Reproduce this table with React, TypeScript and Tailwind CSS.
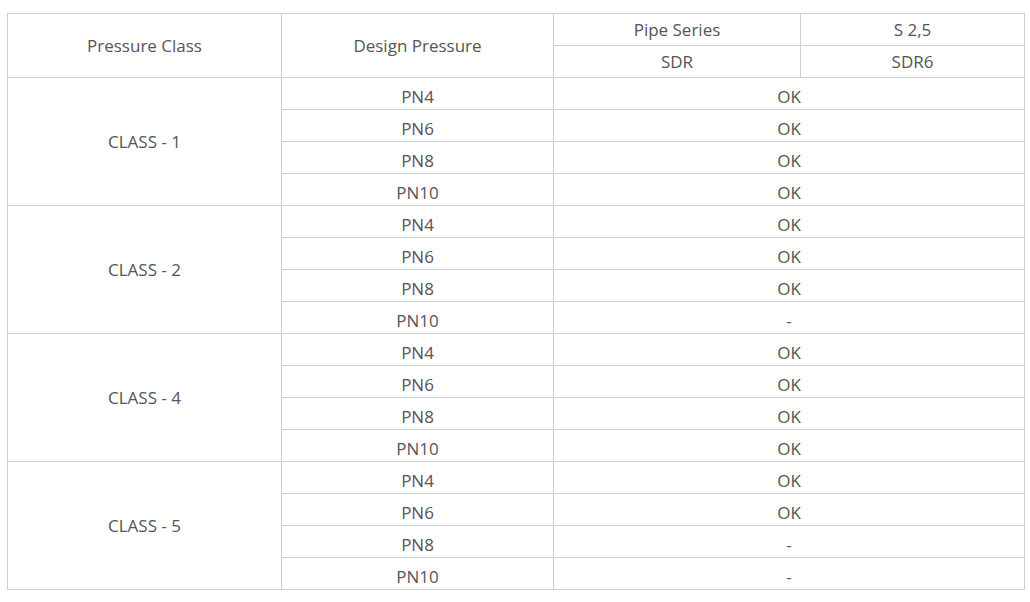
const groups = [
  { name: "CLASS - 1", values: ["OK", "OK", "OK", "OK"] },
  { name: "CLASS - 2", values: ["OK", "OK", "OK", "-"] },
  { name: "CLASS - 4", values: ["OK", "OK", "OK", "OK"] },
  { name: "CLASS - 5", values: ["OK", "OK", "-", "-"] },
]

const pressures = ["PN4", "PN6", "PN8", "PN10"]

const cell = "border border-[#d0d0d0] text-center align-middle p-0 leading-[24px]"

export default function App() {
  return (
    <div className="min-h-screen bg-white pt-[13px] pl-[7px] font-['Open_Sans',sans-serif] text-[17px] text-[#555555]">
      <table className="w-[1017px] table-fixed border-collapse">
        <colgroup>
          <col className="w-[274px]" />
          <col className="w-[272px]" />
          <col className="w-[247px]" />
          <col className="w-[224px]" />
        </colgroup>
        <thead>
          <tr className="h-[32px]">
            <th rowSpan={2} className={`${cell} font-normal`}>Pressure Class</th>
            <th rowSpan={2} className={`${cell} font-normal`}>Design Pressure</th>
            <th className={`${cell} font-normal`}>Pipe Series</th>
            <th className={`${cell} font-normal`}>S 2,5</th>
          </tr>
          <tr className="h-[32px]">
            <th className={`${cell} font-normal`}>SDR</th>
            <th className={`${cell} font-normal`}>SDR6</th>
          </tr>
        </thead>
        <tbody>
          {groups.map((group) =>
            pressures.map((pn, i) => (
              <tr key={group.name + pn} className="h-[32px]">
                {i === 0 && (
                  <td rowSpan={4} className={cell}>
                    {group.name}
                  </td>
                )}
                <td className={`${cell} pt-[7px]`}>{pn}</td>
                <td colSpan={2} className={`${cell} pt-[7px]`}>
                  {group.values[i]}
                </td>
              </tr>
            ))
          )}
        </tbody>
      </table>
    </div>
  )
}
